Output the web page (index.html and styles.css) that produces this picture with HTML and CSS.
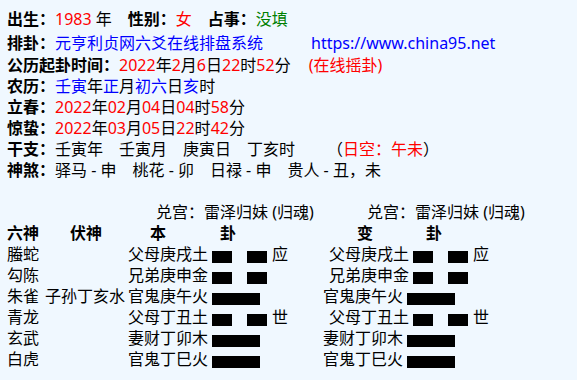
FILE: index.html
```html
<!DOCTYPE html>
<html lang="zh">
<head>
<meta charset="utf-8">
<title>六爻排盘</title>
<link rel="stylesheet" href="styles.css">
</head>
<body>
<div class="info">
  <div class="row r1"><b>出生：</b><span class="red">1983</span> 年<b class="gap">性别：</b><span class="red">女</span><b class="gap">占事：</b><span class="green">没填</span></div>
  <div class="row r2"><b>排卦：</b><span class="blue">元亨利贞网六爻在线排盘系统</span><span class="blue url">https://www.china95.net</span></div>
  <div class="row"><b>公历起卦时间：</b><span class="red">2022</span>年<span class="red">2</span>月<span class="red">6</span>日<span class="red">22</span>时<span class="red">52</span>分<span class="red online">(在线摇卦)</span></div>
  <div class="row"><b>农历：</b><span class="blue">壬寅</span>年<span class="blue">正</span>月<span class="blue">初六</span>日<span class="blue">亥</span>时</div>
  <div class="row"><b>立春：</b><span class="red">2022</span>年<span class="red">02</span>月<span class="red">04</span>日<span class="red">04</span>时<span class="red">58</span>分</div>
  <div class="row"><b>惊蛰：</b><span class="red">2022</span>年<span class="red">03</span>月<span class="red">05</span>日<span class="red">22</span>时<span class="red">42</span>分</div>
  <div class="row"><b>干支：</b>壬寅年　壬寅月　庚寅日　丁亥时<span class="kong">（<span class="red">日空：午未</span>）</span></div>
  <div class="row"><b>神煞：</b>驿马 - 申　桃花 - 卯　日禄 - 申　贵人 - 丑，未</div>
</div>

<div class="gua">
  <div class="grow">
    <span class="c1"></span><span class="c2"></span>
    <span class="c3 gong1">兑宫：雷泽归妹 (归魂)</span>
    <span class="c4 gong2">兑宫：雷泽归妹 (归魂)</span>
  </div>
  <div class="grow head">
    <span class="c1">六神</span>
    <span class="c2 h2">伏神</span>
    <span class="c3 h3"><span>本</span><span class="hgua">卦</span></span>
    <span class="c4 h4"><span>变</span><span class="hgua">卦</span></span>
  </div>
  <div class="grow">
    <span class="c1">螣蛇</span><span class="c2"></span>
    <span class="c3">父母庚戌土<i class="yin"><i></i><i></i></i><span class="mark">应</span></span>
    <span class="c4 yinrow">父母庚戌土<i class="yin"><i></i><i></i></i><span class="mark">应</span></span>
  </div>
  <div class="grow">
    <span class="c1">勾陈</span><span class="c2"></span>
    <span class="c3">兄弟庚申金<i class="yin"><i></i><i></i></i></span>
    <span class="c4 yinrow">兄弟庚申金<i class="yin"><i></i><i></i></i></span>
  </div>
  <div class="grow">
    <span class="c1">朱雀</span><span class="c2">子孙丁亥水</span>
    <span class="c3">官鬼庚午火<i class="yang"></i></span>
    <span class="c4">官鬼庚午火<i class="yang"></i></span>
  </div>
  <div class="grow">
    <span class="c1">青龙</span><span class="c2"></span>
    <span class="c3">父母丁丑土<i class="yin"><i></i><i></i></i><span class="mark">世</span></span>
    <span class="c4 yinrow">父母丁丑土<i class="yin"><i></i><i></i></i><span class="mark">世</span></span>
  </div>
  <div class="grow">
    <span class="c1">玄武</span><span class="c2"></span>
    <span class="c3">妻财丁卯木<i class="yang"></i></span>
    <span class="c4">妻财丁卯木<i class="yang"></i></span>
  </div>
  <div class="grow">
    <span class="c1">白虎</span><span class="c2"></span>
    <span class="c3">官鬼丁巳火<i class="yang"></i></span>
    <span class="c4">官鬼丁巳火<i class="yang"></i></span>
  </div>
</div>
</body>
</html>
```

FILE: styles.css
```css
html, body {
  margin: 0;
  padding: 0;
}
*, *::before, *::after {
  box-sizing: border-box;
}
body {
  background: #f0f8ff;
  color: #000;
  font-family: "Noto Sans", "Noto Sans CJK SC", sans-serif;
  font-size: 16px;
  line-height: 21px;
  padding: 9px 7px 0 7px;
}
b {
  font-weight: bold;
}
.red { color: #ff0000; }
.green { color: #008000; }
.blue { color: #0000ff; }

.row {
  white-space: nowrap;
  height: 21px;
}
.r1 { height: 24px; }
.r2 { height: 22px; }
.gap { margin-left: 16px; }
.url { margin-left: 48px; }
.online { margin-left: 18px; }
.kong { margin-left: 32px; }

.gua {
  margin-top: 21px;
}
.grow {
  display: flex;
  white-space: nowrap;
  height: 21px;
  align-items: baseline;
}
.c1 { width: 38px; flex: none; }
.c2 { width: 83px; flex: none; }
.c3 { width: 195px; flex: none; }
.c4 { flex: none; }
.gong1 { padding-left: 28px; }
.gong2 { padding-left: 44px; }
.head { font-weight: bold; }
.h2 { padding-left: 25px; }
.h3 { padding-left: 22px; }
.h4 { padding-left: 34px; }
.hgua { margin-left: 54px; }
.h4 .hgua { margin-left: 53px; }
.yinrow { padding-left: 6px; }

.yang, .yin {
  display: inline-block;
  height: 12px;
  margin-left: 4px;
  vertical-align: -3px;
}
.yang {
  width: 48px;
  background: #000;
}
.yin {
  width: 55px;
  display: inline-flex;
  justify-content: space-between;
}
.yin i {
  display: block;
  width: 20px;
  height: 12px;
  background: #000;
}
.mark { margin-left: 5px; }
```
